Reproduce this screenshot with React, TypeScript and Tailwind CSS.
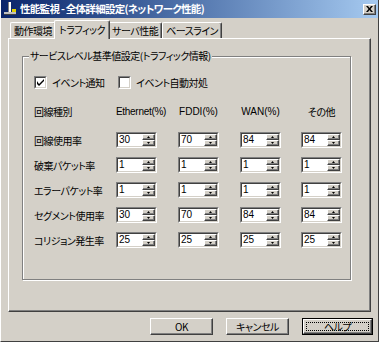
import * as React from 'react';

const jp = "font-['Noto_Sans_CJK_JP','Noto_Sans',sans-serif] [font-feature-settings:'palt']";
const raisedOuter = 'border border-t-white border-l-white border-r-[#404040] border-b-[#404040]';
const raisedInner = 'shadow-[inset_-1px_-1px_0_#808080]';

const SpinArrow = ({ up }: { up?: boolean }) => (
  <div className={`flex-1 flex items-center justify-center bg-[#d4d0c8] ${raisedOuter} ${raisedInner}`}>
    <svg width="3" height="2" viewBox="0 0 3 2">
      {up ? <path d="M1.5 0 L3 2 L0 2 Z" fill="#000" /> : <path d="M0 0 L3 0 L1.5 2 Z" fill="#000" />}
    </svg>
  </div>
);

const Spin = ({ value }: { value: string }) => (
  <div className="w-[41px] h-[16px] border border-t-[#808080] border-l-[#808080] border-r-white border-b-white">
    <div className="flex h-full bg-white border border-t-[#404040] border-l-[#404040] border-r-[#d4d0c8] border-b-[#d4d0c8]">
      <span className="flex-1 pl-[1px] text-[10px] leading-[12px] tracking-normal font-['Liberation_Sans',sans-serif]">{value}</span>
      <div className="flex flex-col w-[13px]">
        <SpinArrow up />
        <SpinArrow />
      </div>
    </div>
  </div>
);

const Check = ({ checked }: { checked?: boolean }) => (
  <div className="w-[13px] h-[13px] border border-t-[#808080] border-l-[#808080] border-r-white border-b-white">
    <div className="w-full h-full bg-white border border-t-[#404040] border-l-[#404040] border-r-[#d4d0c8] border-b-[#d4d0c8] flex items-center justify-center">
      {checked && (
        <svg width="7" height="7" viewBox="0 0 7 7">
          <path d="M0 2 L0 5 L2 7 L7 2 L7 0 L2 5 Z" fill="#000" />
        </svg>
      )}
    </div>
  </div>
);

const Tab = ({ label, active }: { label: string; active?: boolean }) => (
  <div
    className={`flex items-center justify-center rounded-t-[2px] border border-b-0 border-t-white border-l-white border-r-[#404040] bg-[#d4d0c8] shadow-[inset_-1px_0_0_#808080] text-[10px] ${
      active ? 'h-[19px] -mx-[2px] px-[4px] relative z-10 -mb-px pb-[2px]' : 'h-[16px] px-[3px]'
    }`}
  >
    {label}
  </div>
);

const Button = ({ label, width, isDefault }: { label: string; width: string; isDefault?: boolean }) =>
  isDefault ? (
    <div className={`${width} h-[17px] border border-black`}>
      <div className={`h-full ${raisedOuter} ${raisedInner} flex items-center justify-center p-[2px]`}>
        <div className="w-full h-full border border-dotted border-black flex items-center justify-center text-[10px]">{label}</div>
      </div>
    </div>
  ) : (
    <div className={`${width} h-[17px] ${raisedOuter} ${raisedInner} flex items-center justify-center text-[10px]`}>{label}</div>
  );

const rows = [
  { name: '回線使用率', v: ['30', '70', '84', '84'] },
  { name: '破棄パケット率', v: ['1', '1', '1', '1'] },
  { name: 'エラーパケット率', v: ['1', '1', '1', '1'] },
  { name: 'セグメント使用率', v: ['30', '70', '84', '84'] },
  { name: 'コリジョン発生率', v: ['25', '25', '25', '25'] },
];

export default function App() {
  return (
    <div className={`w-[379px] h-[342px] bg-[#d4d0c8] text-black ${jp} tracking-[-0.5px] flex flex-col border-l border-l-white border-r border-r-[#404040] border-b border-b-[#404040] overflow-hidden`}>
      {/* TITLE BAR */}
      <div className="h-[18px] shrink-0 flex items-center bg-gradient-to-r from-[#0a246a] to-[#a6caf0] pl-[2px] pr-[2px]">
        <svg width="14" height="14" viewBox="0 0 14 14" className="mr-[3px]">
          <rect x="5" y="0" width="3" height="11" fill="#fff" />
          <rect x="5" y="0" width="1" height="11" fill="#808080" />
          <rect x="1" y="10" width="12" height="3" fill="#c0c0c0" />
          <rect x="1" y="12" width="12" height="1" fill="#404040" />
          <rect x="9" y="7" width="4" height="3" fill="#e0d000" />
        </svg>
        <span className="flex-1 text-white font-bold text-[10.5px] tracking-[-0.7px] leading-none">性能監視 - 全体詳細設定(ネットワーク性能)</span>
        <div className={`w-[13px] h-[11px] bg-[#d4d0c8] ${raisedOuter} ${raisedInner} flex items-center justify-center`}>
          <svg width="7" height="6" viewBox="0 0 7 6">
            <path d="M0 0 L2 0 L3.5 2 L5 0 L7 0 L4.5 3 L7 6 L5 6 L3.5 4 L2 6 L0 6 L2.5 3 Z" fill="#000" />
          </svg>
        </div>
      </div>

      {/* TABS */}
      <div className="h-[20px] shrink-0 flex items-end pl-[9px]">
        <Tab label="動作環境" />
        <Tab label="トラフィック" active />
        <Tab label="サーバ性能" />
        <Tab label="ベースライン" />
      </div>

      {/* TAB PANEL */}
      <div className={`ml-[7px] w-[363px] h-[274px] shrink-0 ${raisedOuter} ${raisedInner} pl-[13px] pt-[17px]`}>
        <div className="relative w-[329px] h-[224px] border border-[#808080] shadow-[inset_1px_1px_0_#fff,1px_1px_0_#fff] pl-[11px] pt-[19px]">
          <span className="absolute left-[6px] -top-[7px] px-[1px] bg-[#d4d0c8] text-[10px] leading-[12px]">サービスレベル基準値設定(トラフィック情報)</span>

          <div className="flex items-center h-[13px] text-[10px]">
            <Check checked />
            <span className="ml-[5px] w-[66px]">イベント通知</span>
            <Check />
            <span className="ml-[5px]">イベント自動対処</span>
          </div>

          <div className="grid grid-cols-[82px_62px_62px_61px_41px] items-center mt-[17px] text-[10px]">
            <span className="leading-[12px]">回線種別</span>
            <span className="w-[41px] text-center leading-[12px] font-['Liberation_Sans',sans-serif] tracking-[-0.3px]">Ethernet(%)</span>
            <span className="w-[41px] text-center leading-[12px] font-['Liberation_Sans',sans-serif] tracking-normal">FDDI(%)</span>
            <span className="w-[41px] text-center leading-[12px] font-['Liberation_Sans',sans-serif] tracking-normal">WAN(%)</span>
            <span className="w-[41px] text-center leading-[12px]">その他</span>
          </div>

          <div className="flex flex-col gap-[9px] mt-[14px]">
            {rows.map((r) => (
              <div key={r.name} className="grid grid-cols-[82px_62px_62px_61px_41px] items-center text-[10px]">
                <span>{r.name}</span>
                {r.v.map((v, i) => (
                  <Spin key={i} value={v} />
                ))}
              </div>
            ))}
          </div>
        </div>
      </div>

      {/* BUTTONS */}
      <div className="flex justify-end gap-[13px] mt-[6px] pr-[5px]">
        <Button label="OK" width="w-[63px]" />
        <Button label="キャンセル" width="w-[63px]" />
        <Button label="ヘルプ" width="w-[71px]" isDefault />
      </div>
    </div>
  );
}
